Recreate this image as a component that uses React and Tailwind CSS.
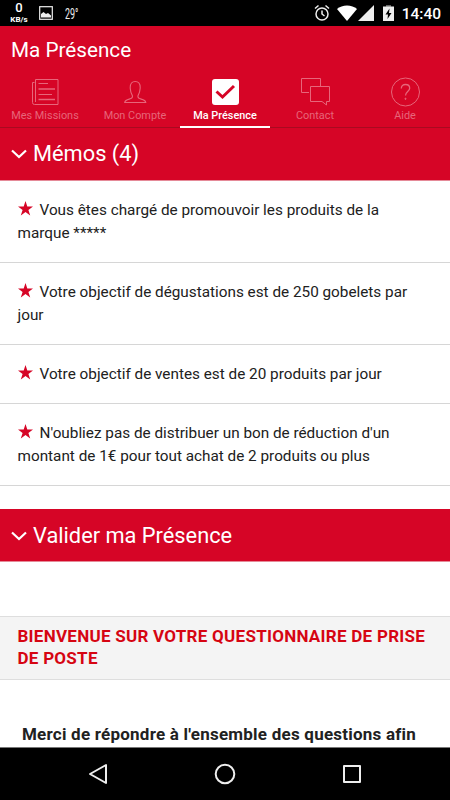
import clsx from "clsx";

const memos = [
  ["Vous êtes chargé de promouvoir les produits de la", "marque *****"],
  ["Votre objectif de dégustations est de 250 gobelets par", "jour"],
  ["Votre objectif de ventes est de 20 produits par jour"],
  ["N'oubliez pas de distribuer un bon de réduction d'un", "montant de 1€ pour tout achat de 2 produits ou plus"],
];

const MissionsIcon = () => (
  <svg width="30" height="30" viewBox="0 0 30 30" fill="none" stroke="currentColor">
    <path d="M5.500 2.500h22.500v25H4.500a2 2 0 0 1-2-2v-20h2M5.500 2.500v22.500" />
    <path d="M8.500 6.500h9.500M8.500 17.500h13.500" />
    <path d="M8.500 12h16.500M8.500 22.500h16.500" strokeWidth="1.500" />
  </svg>
);

const AccountIcon = () => (
  <svg width="30" height="30" viewBox="0 0 30 30" fill="none" stroke="currentColor" strokeWidth="1.100">
    <path d="M4.700 25.500c.3-2 2-2.800 4.500-3.400 2.400-.6 3.300-1.100 3.300-2.600 0-1.700-1.500-2.700-1.800-5.300-.2-1.400-.5-2.200-.5-3.700 0-4 1.800-6 5-6s5 2 5 6c0 1.500-.3 2.300-.5 3.700-.3 2.600-1.800 3.600-1.800 5.300 0 1.500.9 2 3.300 2.600 2.500.6 4.300 1.400 4.600 3.400z" />
  </svg>
);

const PresenceIcon = () => (
  <svg width="30" height="30" viewBox="0 0 30 30">
    <rect x="2" y="2" width="27" height="26" rx="3" fill="white" />
    <path d="M6.500 14.500l6 5.500L24 9" fill="none" stroke="#d60526" strokeWidth="3" />
  </svg>
);

const ContactIcon = () => (
  <svg width="30" height="30" viewBox="0 0 30 30" fill="none" stroke="currentColor">
    <path d="M9 15.500H1.500v-14h19v7.500" />
    <path d="M10.500 9.500h19v15h-3v3.500l-4.500-3.500H10.500z" />
  </svg>
);

const HelpIcon = () => (
  <svg width="30" height="30" viewBox="0 0 30 30" fill="none" stroke="currentColor">
    <circle cx="15.500" cy="15" r="14" />
    <path d="M11.300 11.500c0-2.500 1.700-4 4.200-4s4.200 1.500 4.200 3.800c0 3-4.200 3.700-4.200 7.200" strokeWidth="1.300" />
    <circle cx="15.500" cy="21.800" r=".6" fill="currentColor" />
  </svg>
);

const tabs = [
  { label: "Mes Missions", icon: MissionsIcon },
  { label: "Mon Compte", icon: AccountIcon },
  { label: "Ma Présence", icon: PresenceIcon, active: true },
  { label: "Contact", icon: ContactIcon },
  { label: "Aide", icon: HelpIcon },
];

function StatusBar() {
  return (
    <div className="flex h-[26px] shrink-0 items-center bg-black text-white">
      <div className="ml-[9px] flex w-5 flex-col items-center">
        <span className="text-[13px] leading-[14px] font-medium">0</span>
        <span className="text-[8px] leading-[10px] font-bold">KB/s</span>
      </div>
      <svg className="ml-[10px]" width="14" height="14" viewBox="0 0 14 14">
        <rect x=".7" y=".7" width="12.600" height="12.600" fill="none" stroke="#eee" strokeWidth="1.200" />
        <path d="M2 11.500V8l2.500-2L7 8l2-1 3 2.500v2z" fill="#eee" />
      </svg>
      <span className="mt-[2px] ml-[12px] origin-left scale-x-[0.640] text-[14px] leading-[18px] whitespace-nowrap text-[#eee]">
        29°
      </span>
      <div className="ml-auto flex items-center">
        <svg width="16" height="18" viewBox="0 0 16 18" fill="none" stroke="#eee" strokeWidth="1.500">
          <circle cx="8" cy="10" r="6" />
          <path d="M8 6.500V10l2.500 2M1 4.500l3.500-3M15 4.500l-3.500-3" />
        </svg>
        <svg className="ml-[7px]" width="20" height="16" viewBox="0 0 20 16">
          <path d="M0 4C5-.8 15-.8 20 4L10 16z" fill="white" />
        </svg>
        <svg className="ml-[1px]" width="16" height="16" viewBox="0 0 16 16">
          <path d="M16 0v16H0z" fill="#eee" />
        </svg>
        <svg className="ml-[9px]" width="11" height="16" viewBox="0 0 11 16">
          <path d="M3 0h5v2H3z" fill="#666" />
          <path d="M0 1.500h11V16H0z" fill="#eee" />
          <path d="M6.500 3.500L2.500 9.500H5L4.500 14l4-6H6z" fill="black" />
        </svg>
        <span className="mt-[3px] mr-[9px] ml-2 text-[15.500px] leading-none font-medium">14:40</span>
      </div>
    </div>
  );
}

function SectionHeader({ children, className }) {
  return (
    <div
      className={clsx(
        "flex h-[53px] shrink-0 items-center border-b border-[#e58a98] bg-[#d60526] pl-[11px] text-white",
        className
      )}
    >
      <svg width="16" height="10" viewBox="0 0 16 10" fill="none" stroke="white" strokeWidth="2.200">
        <path d="M1 1.500l7 6.500 7-6.500" />
      </svg>
      <h2 className="ml-[6px] text-[21.800px] leading-none whitespace-nowrap">{children}</h2>
    </div>
  );
}

function Star() {
  return (
    <svg className="mr-[7px] inline-block align-[-1px]" width="15" height="15" viewBox="0 0 15 15">
      <path d="M7.500 0l1.800 5.400H15l-4.600 3.500 1.800 5.600-4.700-3.400-4.700 3.400 1.800-5.600L0 5.400h5.700z" fill="#d60526" />
    </svg>
  );
}

function App() {
  return (
    <div className="flex h-[800px] w-[450px] flex-col overflow-hidden bg-white font-['Roboto',sans-serif] text-[#212121]">
      <StatusBar />
      <header className="h-[102px] shrink-0 bg-[#d60526] text-white">
        <h1 className="h-[51px] pl-[11px] text-[20.700px] leading-[48px]">Ma Présence</h1>
        <nav className="grid h-[51px] grid-cols-5 border-b border-[#a90a20]">
          {tabs.map(({ label, icon: Icon, active }) => (
            <div
              key={label}
              className={clsx(
                "flex h-[51px] flex-col items-center border-b-2",
                active ? "border-white text-white" : "border-transparent text-[#e7667a]"
              )}
            >
              <Icon />
              <span
                className={clsx(
                  "mt-[2px] text-[10.900px] leading-[14px] whitespace-nowrap",
                  active && "font-medium"
                )}
              >
                {label}
              </span>
            </div>
          ))}
        </nav>
      </header>

      <SectionHeader>Mémos (4)</SectionHeader>
      <ul className="shrink-0">
        {memos.map((lines) => (
          <li
            key={lines[0]}
            className="border-b border-[#d6d6d6] pt-[18px] pb-[17px] pl-[17.500px] text-[15.300px] leading-[23px]"
          >
            {lines.map((line, i) => (
              <div key={line} className="h-[23px] whitespace-nowrap">
                {i === 0 && <Star />}
                {line}
              </div>
            ))}
          </li>
        ))}
      </ul>

      <SectionHeader className="mt-[23px] pt-[2px]">Valider ma Présence</SectionHeader>
      <div className="mt-[54px] h-[64px] shrink-0 border-y border-[#dedede] bg-[#f4f4f4] pt-[8px] pl-[17.500px] text-[17px] leading-[22px] font-bold tracking-[0.270px] whitespace-nowrap text-[#d60512]">
        BIENVENUE SUR VOTRE QUESTIONNAIRE DE PRISE
        <br />
        DE POSTE
      </div>
      <p className="mt-[43px] shrink-0 pl-[22px] text-[17px] leading-[22px] font-bold tracking-[0.230px] whitespace-nowrap">
        Merci de répondre à l'ensemble des questions afin
      </p>

      <footer className="mt-auto flex h-[53px] shrink-0 items-center justify-center gap-[105px] border-t border-[#777] bg-black">
        <svg width="22" height="22" viewBox="0 0 22 22" fill="none" stroke="#eee" strokeWidth="2" strokeLinejoin="round">
          <path d="M19 2v18L3 11z" />
        </svg>
        <svg width="22" height="22" viewBox="0 0 22 22" fill="none" stroke="#eee" strokeWidth="2">
          <circle cx="11" cy="11" r="9.300" />
        </svg>
        <svg width="22" height="22" viewBox="0 0 22 22" fill="none" stroke="#eee" strokeWidth="2" strokeLinejoin="round">
          <rect x="3" y="3" width="16" height="16" />
        </svg>
      </footer>
    </div>
  );
}

export default App;
